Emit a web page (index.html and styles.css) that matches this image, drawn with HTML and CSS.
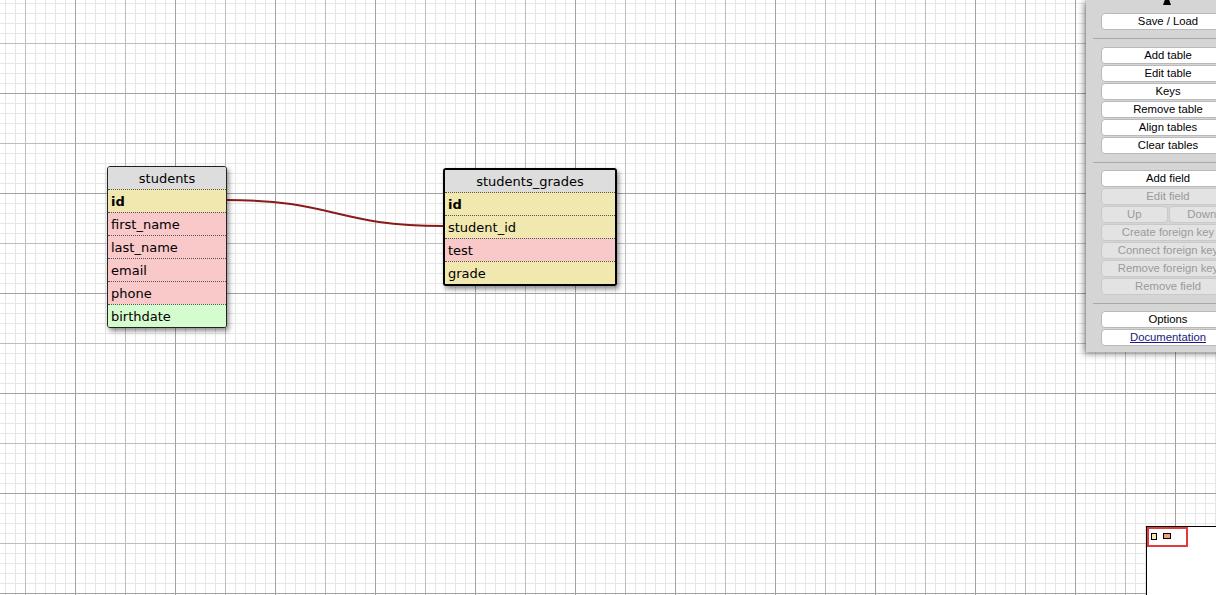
FILE: index.html
```html
<!DOCTYPE html>
<html>
<head>
<meta charset="utf-8">
<title>WWW SQL Designer</title>
<link rel="stylesheet" href="styles.css">
</head>
<body>
<div class="area">
  <svg class="relations" width="1216" height="595" viewBox="0 0 1216 595">
    <path d="M226,200 C335,200 335,226 443,226" fill="none" stroke="#8a1a1a" stroke-width="2"/>
  </svg>

  <div class="table t-students">
    <div class="title">students</div>
    <div class="row num pk">id</div>
    <div class="row chr">first_name</div>
    <div class="row chr">last_name</div>
    <div class="row chr">email</div>
    <div class="row chr">phone</div>
    <div class="row dt">birthdate</div>
  </div>

  <div class="table t-grades selected">
    <div class="title">students_grades</div>
    <div class="row num pk">id</div>
    <div class="row num">student_id</div>
    <div class="row chr">test</div>
    <div class="row num">grade</div>
  </div>
</div>

<div class="bar">
  <div class="toggle"><svg width="10" height="6" viewBox="0 0 10 6"><polygon points="5,-6 9,5 1,5" fill="#000"/></svg></div>
  <button class="btn">Save / Load</button>
  <div class="sep"></div>
  <button class="btn">Add table</button>
  <button class="btn">Edit table</button>
  <button class="btn">Keys</button>
  <button class="btn">Remove table</button>
  <button class="btn">Align tables</button>
  <button class="btn">Clear tables</button>
  <div class="sep"></div>
  <button class="btn">Add field</button>
  <button class="btn off">Edit field</button>
  <div class="pair">
    <button class="btn off">Up</button>
    <button class="btn off">Down</button>
  </div>
  <button class="btn off">Create foreign key</button>
  <button class="btn off">Connect foreign key</button>
  <button class="btn off">Remove foreign key</button>
  <button class="btn off">Remove field</button>
  <div class="sep"></div>
  <button class="btn">Options</button>
  <button class="btn"><span class="link">Documentation</span></button>
</div>

<div class="minimap">
  <div class="mm-view"></div>
  <div class="mm-t mm-t1"></div>
  <div class="mm-t mm-t2"></div>
</div>
</body>
</html>
```

FILE: styles.css
```css
html, body {
  margin: 0;
  padding: 0;
  width: 1216px;
  height: 595px;
  overflow: hidden;
}

body {
  position: relative;
  background-color: #fff;
  background-image:
    linear-gradient(to right, #a2a2a2 1px, transparent 1px),
    linear-gradient(to bottom, #a2a2a2 1px, transparent 1px),
    linear-gradient(to right, #bdbdbd 1px, transparent 1px),
    linear-gradient(to bottom, #bdbdbd 1px, transparent 1px),
    linear-gradient(to right, #e6e6e6 1px, transparent 1px),
    linear-gradient(to bottom, #e6e6e6 1px, transparent 1px);
  background-size: 100px 100px, 100px 100px, 50px 50px, 50px 50px, 10px 10px, 10px 10px;
  background-position: 75px 0, 0 93px, 25px 0, 0 43px, 5px 0, 0 3px;
  font-family: "DejaVu Sans", Verdana, sans-serif;
}

.area {
  position: absolute;
  inset: 0;
}

.relations {
  position: absolute;
  left: 0;
  top: 0;
}

.table {
  position: absolute;
  background: #ddd;
  border: 1px solid #222;
  border-radius: 3px;
  box-shadow: 2px 3px 5px rgba(0, 0, 0, 0.45);
  font-size: 13px;
  color: #000;
  overflow: hidden;
}

.table.selected {
  border: 2px solid #000;
}

.t-students {
  left: 107px;
  top: 166px;
  width: 118px;
}

.t-grades {
  left: 443px;
  top: 168px;
  width: 170px;
}

.title {
  height: 21px;
  padding-top: 1px;
  line-height: 22px;
  text-align: center;
  background: #ddd;
}

.row {
  height: 21px;
  padding-top: 1px;
  line-height: 22px;
  padding-left: 3px;
  border-top: 1px dotted #555;
  white-space: nowrap;
}

.num { background: #f1e8b0; }
.chr { background: #f9c8c8; }
.dt  { background: #d5fccf; }
.pk  { font-weight: bold; }

/* side bar */
.bar {
  position: absolute;
  left: 1086px;
  top: 0;
  width: 164px;
  box-sizing: border-box;
  padding: 0 15px 6px 15px;
  background: #d5d5d5;
  box-shadow: -2px 2px 6px rgba(0, 0, 0, 0.45);
  display: flex;
  flex-direction: column;
  gap: 1px;
  font-family: "Liberation Sans", Arial, sans-serif;
  font-size: 11.3px;
}

.toggle {
  height: 12px;
  display: flex;
  justify-content: center;
  align-items: flex-start;
  padding-right: 2px;
}

.toggle svg {
  display: block;
}

.btn {
  display: block;
  height: 17px;
  width: 100%;
  box-sizing: border-box;
  margin: 0;
  padding: 0;
  border: 1px solid #b9b9b9;
  border-radius: 4px;
  background: #fff;
  color: #000;
  font-family: inherit;
  font-size: 11.3px;
  line-height: 15px;
  text-align: center;
  white-space: nowrap;
  overflow: hidden;
}

.btn.off {
  background: #e3e3e3;
  border-color: #c9c9c9;
  color: #9a9a9a;
}

.pair {
  display: flex;
  gap: 1px;
}

.pair .btn {
  flex: 1;
  width: auto;
}

.sep {
  margin: 7px -8px 7px -8px;
  height: 1px;
  background: #a8a8a8;
}

.sep ~ .sep {
  margin-bottom: 6px;
}

.link {
  color: #1a1a80;
  text-decoration: underline;
}

/* minimap */
.minimap {
  position: absolute;
  left: 1146px;
  top: 526px;
  width: 120px;
  height: 100px;
  background: #fff;
  border: 1px solid #000;
}

.mm-view {
  position: absolute;
  left: 0;
  top: 0;
  width: 37px;
  height: 16px;
  border: 2px solid #e23b3b;
}

.mm-t {
  position: absolute;
  border: 1px solid #000;
  box-sizing: border-box;
}

.mm-t1 {
  left: 4px;
  top: 6px;
  width: 6px;
  height: 7px;
  background: #f7e9b0;
}

.mm-t2 {
  left: 16px;
  top: 6px;
  width: 8px;
  height: 6px;
  background: #f2a07a;
}
```
